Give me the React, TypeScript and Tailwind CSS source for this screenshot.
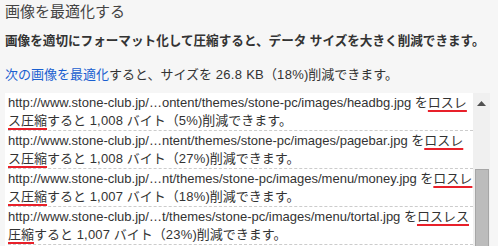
const FONT = "font-['Liberation_Sans','Noto_Sans_CJK_JP',sans-serif]";

type Row = {
  url: string;
  head: string;
  tail: string;
  bytes: string;
  pct: string;
};

// Line breaks are pinned to where the reference wraps.
const rows: Row[] = [
  {
    url: "http://www.stone-club.jp/…ontent/themes/stone-pc/images/headbg.jpg",
    head: "ロスレ",
    tail: "ス圧縮",
    bytes: "1,008",
    pct: "5%",
  },
  {
    url: "http://www.stone-club.jp/…ntent/themes/stone-pc/images/pagebar.jpg",
    head: "ロスレ",
    tail: "ス圧縮",
    bytes: "1,008",
    pct: "27%",
  },
  {
    url: "http://www.stone-club.jp/…nt/themes/stone-pc/images/menu/money.jpg",
    head: "ロスレ",
    tail: "ス圧縮",
    bytes: "1,007",
    pct: "18%",
  },
  {
    url: "http://www.stone-club.jp/…t/themes/stone-pc/images/menu/tortal.jpg",
    head: "ロスレス",
    tail: "圧縮",
    bytes: "1,007",
    pct: "23%",
  },
];

function Squiggle({ children }: { children: string }) {
  return (
    <span className="underline decoration-[#e8202a] decoration-2 underline-offset-[3px]">
      {children}
    </span>
  );
}

function ResultRow({ row }: { row: Row }) {
  return (
    <li className="border-b border-dashed border-[#cccccc] pt-[1px] text-[13px] leading-[18px] text-[#333333]">
      <div className="whitespace-nowrap">
        {row.url} を<Squiggle>{row.head}</Squiggle>
      </div>
      <div className="whitespace-nowrap">
        <Squiggle>{row.tail}</Squiggle>すると{" "}
        <span className="tracking-[0.2px]">{row.bytes}</span> バイト（
        <span className="tracking-[0.2px]">{row.pct}</span>)削減できます。
      </div>
    </li>
  );
}

export default function App() {
  return (
    <div className={`h-[246px] w-[498px] overflow-hidden bg-[#f6f6f6] ${FONT}`}>
      <h2 className="pl-[5px] pt-[2px] text-[15px] leading-[20px] text-[#444444]">
        画像を最適化する
      </h2>
      <p className="mt-[10px] pl-[5px] text-[12.6px] font-bold leading-[18px] text-[#333333]">
        画像を適切にフォーマット化して圧縮すると、データ サイズを大きく削減できます。
      </p>
      <p className="mt-[16px] pl-[5px] text-[13px] leading-[18px] text-[#333333]">
        <a className="text-[#1a5fd0]">次の画像を最適化</a>すると、サイズを{" "}
        <span className="tracking-[0.3px]">26.8 KB</span>（
        <span className="tracking-[0.3px]">18%</span>)削減できます。
      </p>
      <div className="ml-[5px] mt-[9px] flex h-[200px] w-[485px]">
        <ul className="w-[468px] bg-white pl-[3px]">
          {rows.map((row) => (
            <ResultRow key={row.url} row={row} />
          ))}
        </ul>
        {/* Scrollbar */}
        <div className="flex w-[17px] flex-col items-center bg-[#f0f0f0]">
          <svg width="9" height="5" viewBox="0 0 9 5" className="mt-[8px]">
            <path d="M0 5 L4.5 0 L9 5 Z" fill="#505050" />
          </svg>
          <div className="mt-[63px] h-[100px] w-[14px] border border-[#a6a6a6] bg-[#bcbcbc]" />
        </div>
      </div>
    </div>
  );
}
